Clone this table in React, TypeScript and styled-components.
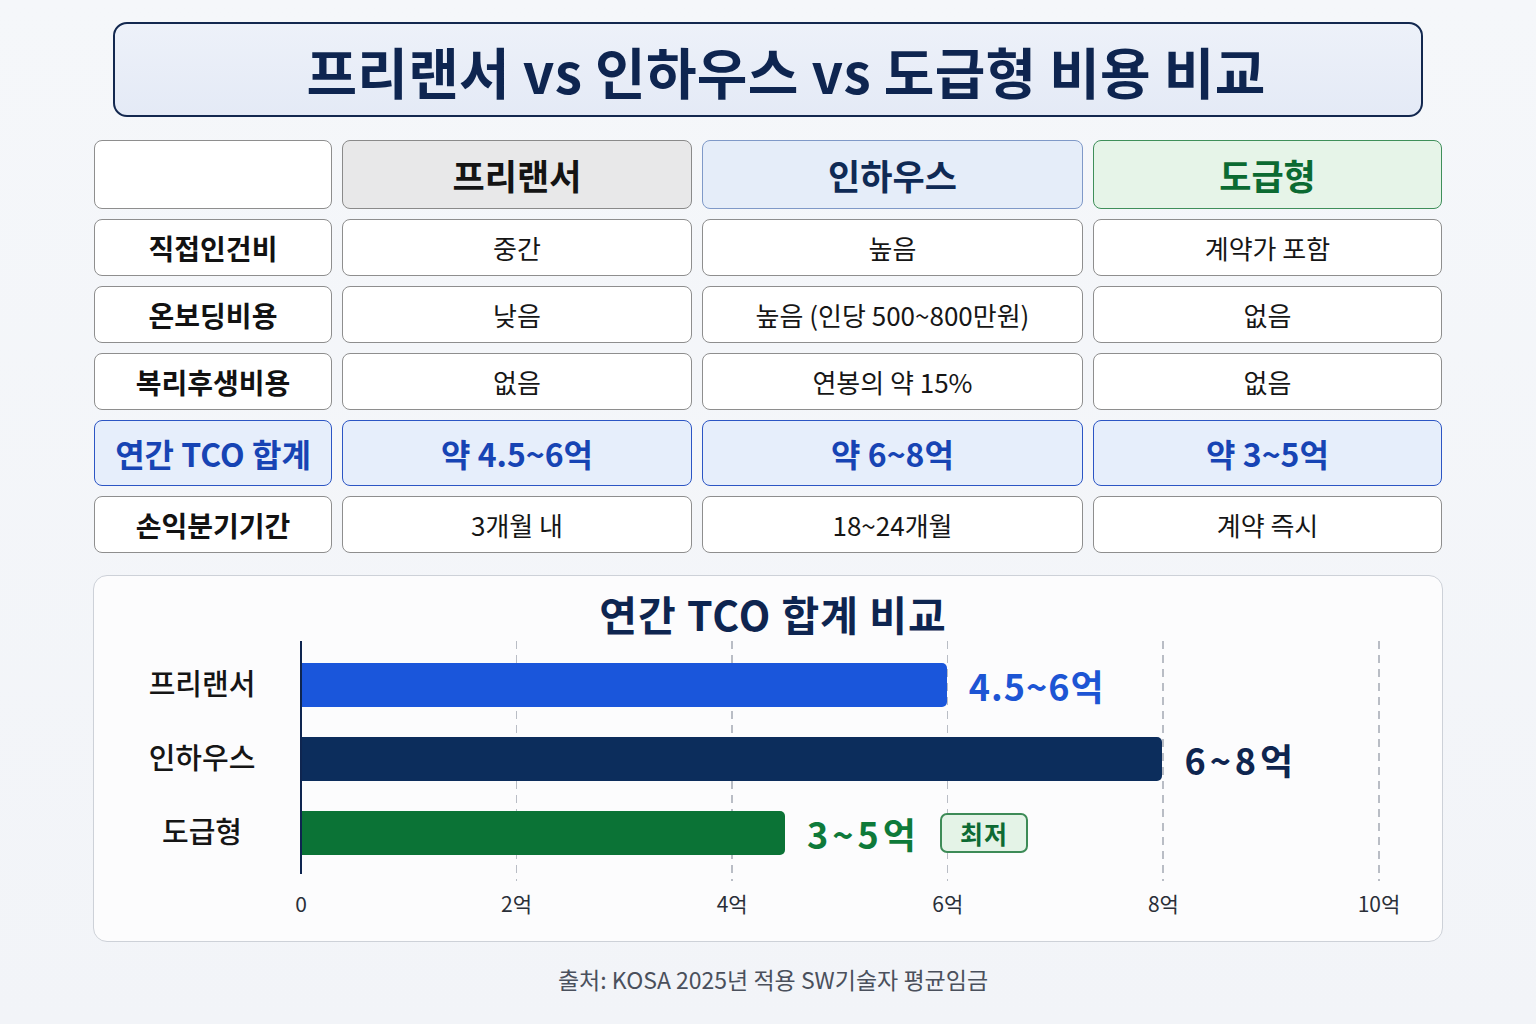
import React from "react";
import styled, { createGlobalStyle, css } from "styled-components";

const Global = createGlobalStyle`
  html, body { margin: 0; padding: 0; }
  body {
    background: linear-gradient(180deg, #f5f7fa 0%, #f2f4f8 100%);
    font-family: "Noto Sans CJK KR", "Noto Sans", sans-serif;
    color: #111;
  }
`;

const Page = styled.div`
  width: 1536px;
  height: 1024px;
  box-sizing: border-box;
  padding-top: 22px;
  display: flex;
  flex-direction: column;
  align-items: center;
`;

const TitleBox = styled.div`
  width: 1310px;
  height: 95px;
  box-sizing: border-box;
  border: 2px solid #13284f;
  border-radius: 14px;
  background: linear-gradient(180deg, #edf1f9 0%, #e4eaf6 100%);
  display: flex;
  align-items: center;
  justify-content: center;
  padding-left: 36px;
`;

const Title = styled.h1`
  margin: 0;
  font-size: 55px;
  font-weight: 700;
  color: #0e2550;
  letter-spacing: 0.3px;
  line-height: 1;
  padding-top: 2px;
`;

const Table = styled.div`
  margin-top: 23px;
  width: 1348px;
  display: grid;
  grid-template-columns: 238px 350px 381px 349px;
  grid-template-rows: 69px 57px 57px 57px 66px 57px;
  column-gap: 10px;
  row-gap: 10px;
`;

type Variant =
  | "blank"
  | "headFree"
  | "headIn"
  | "headSub"
  | "label"
  | "data"
  | "tcoLabel"
  | "tco";

const variants: Record<Variant, ReturnType<typeof css>> = {
  blank: css`
    background: #fff;
    border: 1px solid #8e8e8e;
  `,
  headFree: css`
    background: #e8e8e9;
    border: 1px solid #8a8a8a;
    font-size: 35px;
    font-weight: 700;
    color: #141414;
  `,
  headIn: css`
    background: #e5edf9;
    border: 1px solid #7f99c8;
    font-size: 35px;
    font-weight: 700;
    color: #0f2a55;
  `,
  headSub: css`
    background: #e6f4e8;
    border: 1px solid #3f8f5a;
    font-size: 35px;
    font-weight: 700;
    color: #0c6a32;
  `,
  label: css`
    background: #fff;
    border: 1px solid #8e8e8e;
    font-size: 28px;
    font-weight: 700;
    color: #121212;
  `,
  data: css`
    background: #fff;
    border: 1px solid #8e8e8e;
    font-size: 26px;
    font-weight: 400;
    color: #161616;
  `,
  tcoLabel: css`
    background: #e6eefb;
    border: 1.5px solid #2c55c4;
    font-size: 32px;
    font-weight: 700;
    color: #1744b4;
  `,
  tco: css`
    background: #e6eefb;
    border: 1.5px solid #2c55c4;
    font-size: 32px;
    font-weight: 700;
    color: #1744b4;
  `,
};

const Cell = styled.div<{ $v: Variant }>`
  box-sizing: border-box;
  border-radius: 8px;
  display: flex;
  align-items: center;
  justify-content: center;
  line-height: 1;
  ${(p) => variants[p.$v]}
`;

const ChartBox = styled.div`
  margin-top: 22px;
  width: 1350px;
  box-sizing: border-box;
  background: #fcfcfd;
  border: 1.5px solid #cdd1d8;
  border-radius: 14px;
  padding: 14px 0 26px 0;
  display: flex;
  flex-direction: column;
`;

const ChartTitle = styled.h2`
  margin: 0;
  height: 46px;
  line-height: 46px;
  text-align: center;
  font-size: 41px;
  font-weight: 700;
  letter-spacing: 1px;
  color: #0e2550;
  padding-left: 10px;
`;

const ChartBody = styled.div`
  margin-top: 5px;
  display: flex;
`;

const LabelCol = styled.div`
  width: 206px;
  padding-top: 22px;
  display: flex;
  flex-direction: column;
  gap: 30px;
`;

const RowLabel = styled.div`
  height: 44px;
  display: flex;
  align-items: center;
  justify-content: center;
  padding-left: 10px;
  padding-bottom: 6px;
  box-sizing: border-box;
  font-size: 29px;
  font-weight: 500;
  color: #151515;
`;

const PlotWrap = styled.div`
  flex: 1;
  display: flex;
  flex-direction: column;
`;

const Plot = styled.div`
  position: relative;
  height: 240px;
  padding-top: 22px;
  box-sizing: border-box;
  display: flex;
  flex-direction: column;
  gap: 30px;
`;

const Axis = styled.div`
  position: absolute;
  left: 0;
  top: 0;
  width: 2px;
  height: 233px;
  background: #0e2550;
  z-index: 2;
`;

const GridLine = styled.div`
  position: absolute;
  top: 0;
  height: 240px;
  width: 1.5px;
  background-image: linear-gradient(180deg, #b9bdc5 0 8px, transparent 8px 14px);
  background-size: 1.5px 14px;
  background-repeat: repeat-y;
`;

const BarRow = styled.div`
  position: relative;
  z-index: 1;
  height: 44px;
  display: flex;
  align-items: center;
`;

const Bar = styled.div<{ $color: string }>`
  height: 100%;
  background: ${(p) => p.$color};
  border-radius: 0 5px 5px 0;
  flex: none;
`;

const Value = styled.span<{ $color: string; $ls: number }>`
  margin-left: 22px;
  font-size: 36px;
  font-weight: 700;
  color: ${(p) => p.$color};
  letter-spacing: ${(p) => p.$ls}px;
  line-height: 1;
  white-space: nowrap;
`;

const Badge = styled.span`
  margin-left: 20px;
  width: 88px;
  height: 40px;
  box-sizing: border-box;
  border: 2px solid #3d8b57;
  border-radius: 7px;
  background: #e4f3e7;
  color: #0d6a33;
  font-size: 25px;
  font-weight: 700;
  display: flex;
  align-items: center;
  justify-content: center;
  letter-spacing: 1px;
`;

const TickRow = styled.div`
  position: relative;
  margin-top: 10px;
  height: 24px;
`;

const Tick = styled.span`
  position: absolute;
  top: 0;
  transform: translateX(-50%);
  font-size: 21px;
  line-height: 24px;
  color: #2a2f38;
  white-space: nowrap;
`;

const Footer = styled.div`
  margin-top: 22px;
  font-size: 23px;
  line-height: 30px;
  color: #4a505c;
  padding-left: 10px;
`;

const UNIT = 107.8;

const rows: { label: string; vals: [string, string, string]; tco?: boolean }[] = [
  { label: "직접인건비", vals: ["중간", "높음", "계약가 포함"] },
  { label: "온보딩비용", vals: ["낮음", "높음 (인당 500~800만원)", "없음"] },
  { label: "복리후생비용", vals: ["없음", "연봉의 약 15%", "없음"] },
  { label: "연간 TCO 합계", vals: ["약 4.5~6억", "약 6~8억", "약 3~5억"], tco: true },
  { label: "손익분기기간", vals: ["3개월 내", "18~24개월", "계약 즉시"] },
];

const bars = [
  { label: "프리랜서", value: 6, color: "#1a56db", text: "4.5~6억", textColor: "#1d55d4", ls: 1 },
  { label: "인하우스", value: 8, color: "#0c2d5c", text: "6~8억", textColor: "#0e2550", ls: 4 },
  { label: "도급형", value: 4.5, color: "#0b7336", text: "3~5억", textColor: "#0e7a3a", ls: 4, badge: true },
];

const ticks = [0, 2, 4, 6, 8, 10];

export default function App() {
  return (
    <>
      <Global />
      <Page>
        <TitleBox>
          <Title>프리랜서 vs 인하우스 vs 도급형 비용 비교</Title>
        </TitleBox>

        <Table>
          <Cell $v="blank" />
          <Cell $v="headFree">프리랜서</Cell>
          <Cell $v="headIn">인하우스</Cell>
          <Cell $v="headSub">도급형</Cell>
          {rows.map((r) => (
            <React.Fragment key={r.label}>
              <Cell $v={r.tco ? "tcoLabel" : "label"}>{r.label}</Cell>
              {r.vals.map((v, i) => (
                <Cell key={i} $v={r.tco ? "tco" : "data"}>
                  {v}
                </Cell>
              ))}
            </React.Fragment>
          ))}
        </Table>

        <ChartBox>
          <ChartTitle>연간 TCO 합계 비교</ChartTitle>
          <ChartBody>
            <LabelCol>
              {bars.map((b) => (
                <RowLabel key={b.label}>{b.label}</RowLabel>
              ))}
            </LabelCol>
            <PlotWrap>
              <Plot>
                {ticks.slice(1).map((t) => (
                  <GridLine key={t} style={{ left: t * UNIT }} />
                ))}
                <Axis />
                {bars.map((b) => (
                  <BarRow key={b.label}>
                    <Bar $color={b.color} style={{ width: b.value * UNIT }} />
                    <Value $color={b.textColor} $ls={b.ls}>
                      {b.text}
                    </Value>
                    {b.badge && <Badge>최저</Badge>}
                  </BarRow>
                ))}
              </Plot>
              <TickRow>
                {ticks.map((t) => (
                  <Tick key={t} style={{ left: t * UNIT + 1 }}>
                    {t === 0 ? "0" : `${t}억`}
                  </Tick>
                ))}
              </TickRow>
            </PlotWrap>
          </ChartBody>
        </ChartBox>

        <Footer>출처: KOSA 2025년 적용 SW기술자 평균임금</Footer>
      </Page>
    </>
  );
}
